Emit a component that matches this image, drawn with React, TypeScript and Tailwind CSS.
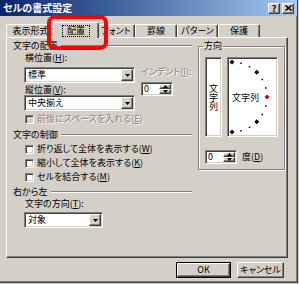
import React from "react";

const sunken =
  "border border-t-[#808080] border-l-[#808080] border-b-white border-r-white shadow-[inset_1px_1px_0_#404040,inset_-1px_-1px_0_#d4d0c8]";
const raised =
  "border border-t-white border-l-white border-b-[#404040] border-r-[#404040] shadow-[inset_-1px_-1px_0_#808080]";

function Key({ k }: { k: string }) {
  return (
    <span>
      (<span className="underline underline-offset-[1px]">{k}</span>)
    </span>
  );
}

function DownTri() {
  return (
    <svg width="5" height="3" viewBox="0 0 5 3">
      <path d="M0 0H5L2.5 3Z" fill="#000" />
    </svg>
  );
}

function Combo({ children, className }: { children: React.ReactNode; className: string }) {
  return (
    <div className={`flex h-[16px] items-stretch bg-white p-[1px] ${sunken} ${className}`}>
      <span className="flex-1 pl-[2px] leading-[12px]">{children}</span>
      <div className={`flex w-[12px] items-center justify-center bg-[#d4d0c8] ${raised}`}>
        <DownTri />
      </div>
    </div>
  );
}

function Spin({ className }: { className: string }) {
  return (
    <div className={`flex h-[14px] items-stretch bg-white p-[1px] ${sunken} ${className}`}>
      <span className="flex-1 pl-[1px] leading-[10px]">0</span>
      <div className="flex w-[12px] flex-col">
        <div className={`flex flex-1 items-center justify-center bg-[#d4d0c8] ${raised}`}>
          <svg width="5" height="3" viewBox="0 0 5 3">
            <path d="M0 3H5L2.5 0Z" fill="#000" />
          </svg>
        </div>
        <div className={`flex flex-1 items-center justify-center bg-[#d4d0c8] ${raised}`}>
          <DownTri />
        </div>
      </div>
    </div>
  );
}

function GroupHeader({ children, className = "" }: { children: React.ReactNode; className?: string }) {
  return (
    <div className={`flex items-center ${className}`}>
      <span>{children}</span>
      <div className="ml-[3px] h-[2px] flex-1 border-t border-b border-t-[#808080] border-b-white" />
    </div>
  );
}

function CheckRow({
  children,
  disabled = false,
  className = "",
}: {
  children: React.ReactNode;
  disabled?: boolean;
  className?: string;
}) {
  return (
    <div className={`flex h-[12px] items-center pl-[12px] ${className}`}>
      <div className={`h-[9px] w-[9px] ${disabled ? "bg-[#d4d0c8]" : "bg-white"} ${sunken}`} />
      <span
        className={`ml-[3px] ${disabled ? "text-[#808080] [text-shadow:1px_1px_0_#fff]" : ""}`}
      >
        {children}
      </span>
    </div>
  );
}

function Tab({
  children,
  className,
  selected = false,
}: {
  children: React.ReactNode;
  className: string;
  selected?: boolean;
}) {
  if (selected) {
    return (
      <div
        className={`relative z-10 -mx-[2px] mb-[-1px] flex h-[16px] items-start justify-center rounded-t-[2px] border-l border-t border-r border-l-white border-t-white border-r-[#404040] bg-[#d4d0c8] pt-[2px] shadow-[inset_-1px_0_0_#808080] ${className}`}
      >
        <span className="border border-dotted border-black px-[4px] leading-[10px]">{children}</span>
      </div>
    );
  }
  return (
    <div
      className={`flex h-[13px] items-center justify-center rounded-t-[2px] border-l border-t border-r border-l-white border-t-white border-r-[#404040] shadow-[inset_-1px_0_0_#808080] ${className}`}
    >
      <span className="leading-[12px]">{children}</span>
    </div>
  );
}

function Dial() {
  const cx = 4;
  const cy = 39;
  const r = 35;
  const angles = [90, 75, 60, 45, 30, 15, 0, -15, -30, -45, -60, -75, -90];
  return (
    <div className={`relative h-[80px] w-[51px] bg-white ${sunken}`}>
      <svg className="absolute inset-0" width="49" height="78" viewBox="0 0 49 78">
        {angles.map((a) => {
          const x = cx + r * Math.cos((a * Math.PI) / 180);
          const y = cy - r * Math.sin((a * Math.PI) / 180);
          if (a === 0) {
            return (
              <polygon
                key={a}
                points={`${x},${y - 2.5} ${x + 2.5},${y} ${x},${y + 2.5} ${x - 2.5},${y}`}
                fill="#e00000"
              />
            );
          }
          if (a % 45 === 0) {
            return (
              <polygon
                key={a}
                points={`${x},${y - 2.5} ${x + 2.5},${y} ${x},${y + 2.5} ${x - 2.5},${y}`}
                fill="#000"
              />
            );
          }
          return <rect key={a} x={x - 0.75} y={y - 0.75} width="1.5" height="1.5" fill="#000" />;
        })}
      </svg>
      <span className="absolute left-[4px] top-[34px] leading-[12px]">文字列</span>
    </div>
  );
}

function PushButton({
  children,
  className,
  isDefault = false,
}: {
  children: React.ReactNode;
  className: string;
  isDefault?: boolean;
}) {
  return (
    <div className={`h-[16px] ${isDefault ? "border border-black" : ""} ${className}`}>
      <div className="flex h-full w-full items-center justify-center border border-t-white border-l-white border-b-[#404040] border-r-[#404040] shadow-[inset_-1px_-1px_0_#808080]">
        <span className="leading-[12px]">{children}</span>
      </div>
    </div>
  );
}

export default function App() {
  return (
    <div className="relative h-[284px] w-[299px] overflow-hidden bg-[#d4d0c8] font-['Noto_Sans_CJK_JP',sans-serif] text-[9px] leading-[12px] text-black [font-feature-settings:'palt']">
      <div className="flex h-[283px] w-[298px] flex-col border-b border-r border-[#404040] shadow-[inset_-1px_-1px_0_#808080]">
        {/* タイトルバー */}
        <div className="flex h-[16px] items-center justify-between bg-linear-to-r from-[#0a246a] to-[#a6caf0] pl-[3px] pr-[3px]">
          <span className="text-[10px] font-bold leading-[12px] text-white">セルの書式設定</span>
          <div className="flex gap-[2px]">
            <div className={`flex h-[11px] w-[12px] items-center justify-center bg-[#d4d0c8] ${raised}`}>
              <span className="text-[9px] font-bold leading-[9px]">?</span>
            </div>
            <div className={`flex h-[11px] w-[12px] items-center justify-center bg-[#d4d0c8] ${raised}`}>
              <svg width="7" height="6" viewBox="0 0 7 6">
                <path d="M0.5 0.5L6.5 5.5M6.5 0.5L0.5 5.5" stroke="#000" strokeWidth="1.6" />
              </svg>
            </div>
          </div>
        </div>

        {/* タブ */}
        <div className="mt-[6px] flex h-[15px] items-end pl-[6px]">
          <Tab className="w-[49px]">表示形式</Tab>
          <Tab className="w-[46px]" selected>
            配置
          </Tab>
          <Tab className="w-[38px]">フォント</Tab>
          <Tab className="w-[42px]">罫線</Tab>
          <Tab className="w-[41px]">パターン</Tab>
          <Tab className="w-[42px]">保護</Tab>
        </div>

        {/* パネル */}
        <div className="ml-[6px] mr-[9px] flex h-[221px] border border-t-white border-l-white border-b-[#404040] border-r-[#404040] pl-[6px] pt-[2px] shadow-[inset_-1px_-1px_0_#808080]">
          <div className="flex w-[179px] flex-col">
            <GroupHeader className="h-[12px]">文字の配置</GroupHeader>
            <div className="flex">
              <div className="flex w-[122px] flex-col pl-[11px]">
                <div className="h-[12px] pl-[1px]">
                  横位置<Key k="H" />:
                </div>
                <Combo className="mt-[3px] w-[111px]">標準</Combo>
                <div className="mt-[1px] h-[11px] pl-[1px] leading-[11px]">
                  縦位置<Key k="V" />:
                </div>
                <Combo className="w-[111px]">中央揃え</Combo>
              </div>
              <div className="ml-[6px] flex flex-col">
                <div className="mt-[14px] h-[12px] text-[#808080] [text-shadow:1px_1px_0_#fff]">
                  インデント<Key k="I" />:
                </div>
                <Spin className="mt-[4px] w-[32px]" />
              </div>
            </div>
            <CheckRow disabled className="mt-[2px]">
              前後にスペースを入れる<Key k="E" />
            </CheckRow>

            <GroupHeader className="mt-[4px] h-[12px]">文字の制御</GroupHeader>
            <CheckRow className="mt-[2px]">
              折り返して全体を表示する<Key k="W" />
            </CheckRow>
            <CheckRow className="mt-[2px]">
              縮小して全体を表示する<Key k="K" />
            </CheckRow>
            <CheckRow className="mt-[2px]">
              セルを結合する<Key k="M" />
            </CheckRow>

            <GroupHeader className="mt-[3px] h-[11px] leading-[11px]">右から左</GroupHeader>
            <div className="mt-[1px] h-[12px] pl-[12px]">
              文字の方向<Key k="T" />:
            </div>
            <Combo className="ml-[11px] mt-[2px] w-[79px]">対象</Combo>
          </div>

          {/* 方向 */}
          <fieldset className="ml-[6px] h-[130px] w-[87px] border border-[#808080] shadow-[inset_1px_1px_0_#fff,1px_1px_0_#fff]">
            <legend className="ml-[4px] px-[1px] leading-[12px]">方向</legend>
            <div className="flex flex-col pl-[6px]">
              <div className="mt-[5px] flex">
                <div className={`flex h-[80px] w-[17px] items-center justify-center bg-white ${sunken}`}>
                  <span className="leading-[9px] [writing-mode:vertical-rl]">文字列</span>
                </div>
                <div className="ml-[5px]">
                  <Dial />
                </div>
              </div>
              <div className="mt-[13px] flex items-center">
                <Spin className="w-[32px]" />
                <span className="ml-[5px]">
                  度<Key k="D" />
                </span>
              </div>
            </div>
          </fieldset>
        </div>

        {/* ボタン */}
        <div className="mt-[4px] flex justify-end gap-[6px] pr-[13px]">
          <PushButton className="w-[55px]" isDefault>
            OK
          </PushButton>
          <PushButton className="w-[47px]">キャンセル</PushButton>
        </div>
      </div>

      {/* 赤枠 */}
      <div className="pointer-events-none absolute left-[47px] top-[15px] h-[35px] w-[61px] rounded-[8px] border-[4px] border-[#ff0000]" />
    </div>
  );
}
